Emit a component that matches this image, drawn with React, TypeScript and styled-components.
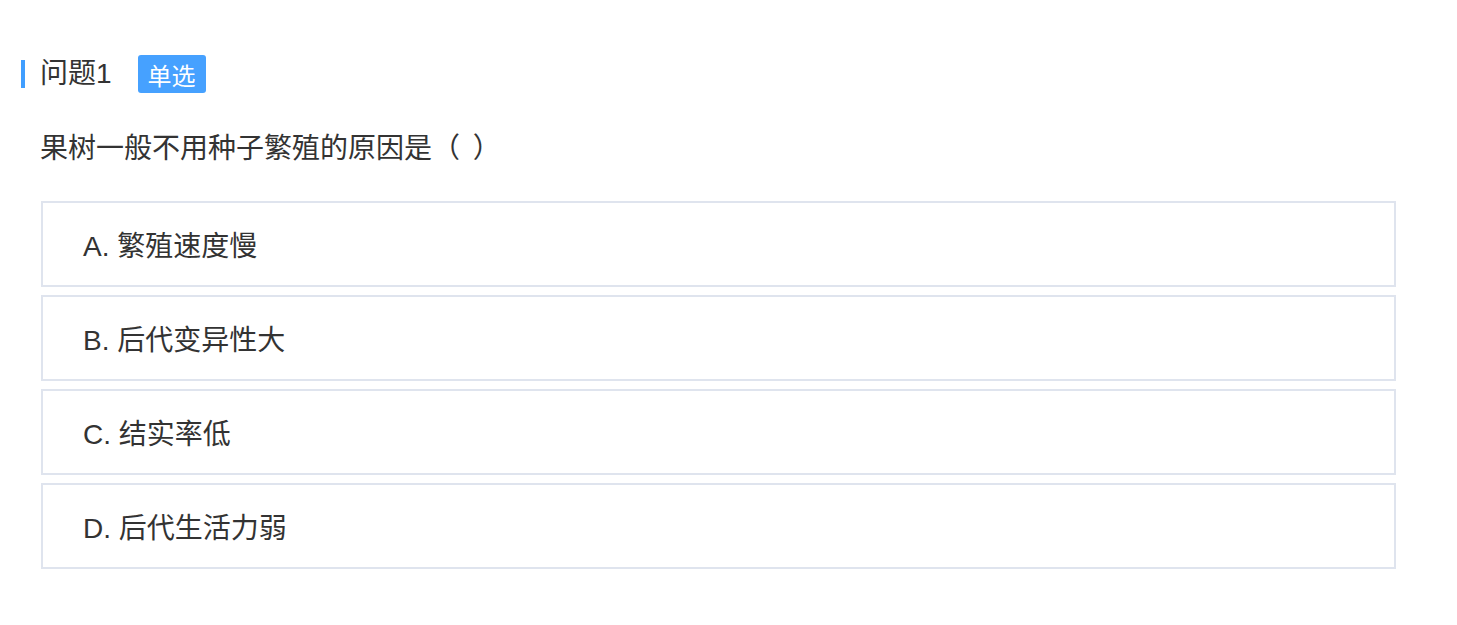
import styled, { createGlobalStyle } from "styled-components";

const GlobalStyle = createGlobalStyle`
	html, body {
		margin: 0;
		padding: 0;
		background: #fff;
	}
	body {
		font-family: "Liberation Sans", "Noto Sans CJK SC", sans-serif;
		color: #333;
	}
`

const Page = styled.div`
	padding: 55px 61px 0 21px;
	width: 1457px;
	box-sizing: border-box;
`

const Header = styled.div`
	display: flex;
	align-items: center;
	height: 38px;
`

const Accent = styled.div`
	width: 4px;
	height: 28px;
	background-color: #409eff;
	margin-right: 15px;
`

const Title = styled.h2`
	margin: 0;
	font-size: 28px;
	font-weight: 400;
	line-height: 38px;
	color: #333;
`

const Badge = styled.span`
	display: inline-flex;
	align-items: center;
	justify-content: center;
	height: 38px;
	padding: 0 10px;
	margin-left: 26px;
	border-radius: 3px;
	background-color: #46a1ff;
	color: #fff;
	font-size: 24px;
	box-sizing: border-box;
`

const Question = styled.p`
	margin: 36px 0 0 19px;
	font-size: 28px;
	line-height: 40px;
	word-spacing: 5px;
	color: #333;
`

const Options = styled.div`
	display: flex;
	flex-direction: column;
	gap: 8px;
	margin: 32px 0 0 20px;
`

const Option = styled.div`
	display: flex;
	align-items: center;
	height: 86px;
	padding-left: 40px;
	border: 2px solid #dfe4ee;
	box-sizing: border-box;
	font-size: 28px;
	color: #333;
	cursor: pointer;
`

const options = ["A. 繁殖速度慢", "B. 后代变异性大", "C. 结实率低", "D. 后代生活力弱"];

export default function App() {
	return (
		<Page>
			<GlobalStyle />
			<Header>
				<Accent />
				<Title>问题1</Title>
				<Badge>单选</Badge>
			</Header>
			<Question>果树一般不用种子繁殖的原因是（ ）</Question>
			<Options>
				{options.map((o) => (
					<Option key={o}>{o}</Option>
				))}
			</Options>
		</Page>
	);
}
